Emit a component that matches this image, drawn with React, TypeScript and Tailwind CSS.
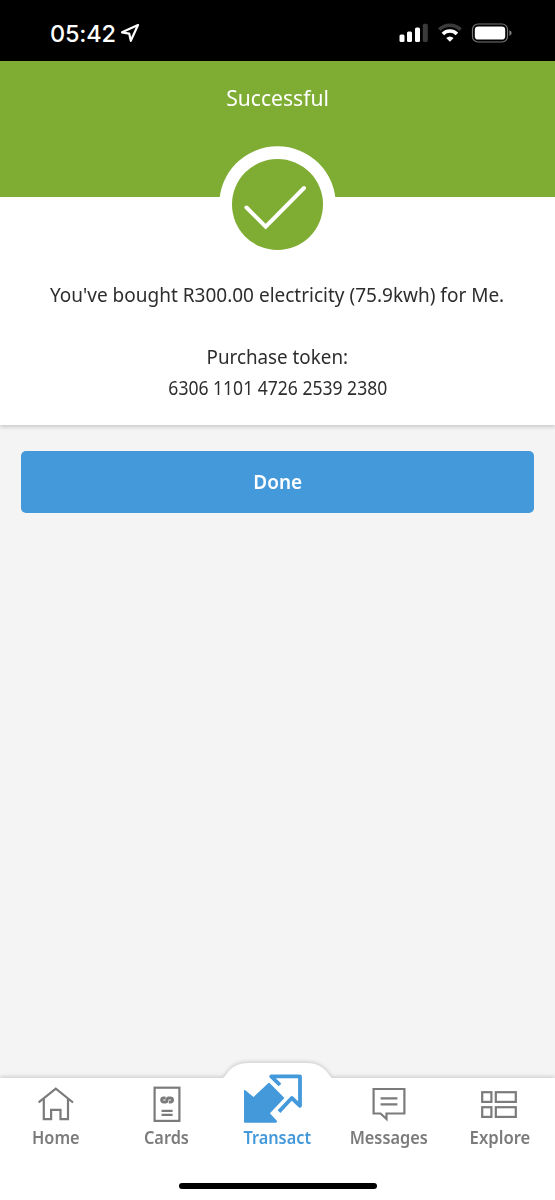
import type { ReactNode } from 'react';

function StatusBar() {
  return (
    <div className="flex h-[61px] shrink-0 items-center bg-black pr-[42px] pl-[50px] text-white">
      <span className="mt-[6px] w-[65px] font-['Inter',sans-serif] text-[23.5px] leading-[30px] font-medium tracking-[-0.2px] whitespace-nowrap">
        05:42
      </span>
      <svg className="mt-[5px] ml-[5px]" width="20" height="20" viewBox="0 0 20 20" fill="none">
        <path
          d="M18 2 L2 9.3 L9.2 10.6 L10.8 17.8 Z"
          stroke="currentColor"
          strokeWidth="2.2"
          strokeLinejoin="round"
        />
      </svg>
      <svg className="mt-[5px] ml-auto" width="114" height="22" viewBox="0 0 114 22">
        <g fill="#fff">
          <rect x="0.5" y="12.5" width="5" height="7.5" rx="1.5" />
          <rect x="8" y="9.5" width="5" height="10.5" rx="1.5" />
          <rect x="16" y="5.5" width="5" height="14.5" rx="1.5" />
          <rect x="23.8" y="1.7" width="5" height="18.3" rx="1.5" fill="#3a3a3a" />
        </g>
        <g fill="none" strokeWidth="3.6">
          <path d="M40.2 7.6 A15.5 15.5 0 0 1 61.6 7.6" stroke="#3a3a3a" />
          <path d="M43.9 12 A9.8 9.8 0 0 1 57.9 12" stroke="#fff" />
        </g>
        <path d="M47.2 16 Q50.9 13 54.6 16 L50.9 19.8 Z" fill="#fff" />
        <rect x="73.5" y="2" width="35" height="18" rx="5.5" fill="none" stroke="#777" strokeWidth="1.2" />
        <rect x="75.8" y="4.4" width="30.4" height="13.2" rx="3.4" fill="#fff" />
        <path d="M110.3 8.2 Q112.7 9 112.7 11 T110.3 13.8 Z" fill="#777" />
      </svg>
    </div>
  );
}

function HomeIcon() {
  return (
    <svg width="36" height="36" viewBox="0 0 36 36" fill="none" stroke="currentColor" strokeWidth="2.2">
      <path d="M0.6 16.5 L17.8 2.6 L35 16.5" />
      <path d="M5.8 13 V33.2 H13.1 V23.8 H22.5 V33.2 H30 V13" />
    </svg>
  );
}

function CardsIcon() {
  return (
    <svg width="36" height="36" viewBox="0 0 36 36" fill="none" stroke="currentColor" strokeWidth="2.2">
      <rect x="5.6" y="1.7" width="24.8" height="33.2" />
      <path d="M12.6 24.8 H23.6 M12.6 28.9 H23.6" />
      <path
        d="M16.6 12 H14.8 Q12.6 12 12.6 14 Q12.6 16 15 16 H16.4 Q18 16 18 14.2 Q18 12 19.7 12 H21.2 Q23.6 12 23.6 14 Q23.6 16 21.4 16 H19.8"
        strokeWidth="2.8"
      />
    </svg>
  );
}

function TransactIcon() {
  return (
    <svg className="mr-[9px]" width="60" height="50" viewBox="0 0 60 50">
      <path
        d="M1.8 17.8 L10.6 25 L26 10.5 L40.4 25 L25.9 40.2 L33.2 48.4 L32.8 49 H1.8 Z"
        fill="currentColor"
        stroke="currentColor"
        strokeWidth="1.6"
        strokeLinejoin="round"
      />
      <path
        d="M37 12 L28.2 3.3 H57 V32.8 L48.8 25 L36 38.6"
        fill="none"
        stroke="currentColor"
        strokeWidth="3.8"
        strokeLinejoin="round"
      />
    </svg>
  );
}

function MessagesIcon() {
  return (
    <svg width="36" height="36" viewBox="0 0 36 36" fill="none" stroke="currentColor" strokeWidth="2.2">
      <path d="M2.6 3 H33.4 V27.5 H15.5 V33 L9.5 27.5 H2.6 Z" />
      <path d="M9.6 12.4 H26.4 M9.6 18.4 H26.4" />
    </svg>
  );
}

function ExploreIcon() {
  return (
    <svg className="mr-[1px]" width="36" height="36" viewBox="0 0 36 36" fill="none" stroke="currentColor" strokeWidth="2.2">
      <rect x="1.2" y="6.2" width="9.2" height="9.7" />
      <rect x="14.8" y="6.2" width="20" height="9.7" />
      <rect x="1.2" y="21.2" width="9.2" height="9.7" />
      <rect x="14.8" y="21.2" width="20" height="9.7" />
    </svg>
  );
}

interface TabProps {
  label: string;
  icon: ReactNode;
  scale: string;
  active?: boolean;
}

function Tab({ label, icon, scale, active }: TabProps) {
  return (
    <button className={`flex flex-1 flex-col items-center ${active ? 'text-[#4499db]' : 'text-[#7b7b7b]'}`}>
      <span className={`flex items-end ${active ? 'h-[61px]' : 'h-[60px]'}`}>{icon}</span>
      <span className={`text-[17px] leading-6 font-semibold whitespace-nowrap ${active ? 'mt-[3px]' : 'mt-1'} ${scale}`}>
        {label}
      </span>
    </button>
  );
}

function TabBar() {
  return (
    <nav className="relative flex h-[138px] shrink-0 flex-col items-center">
      {/* bar background with the raised bump behind the active tab */}
      <svg
        className="absolute top-0 left-0 overflow-visible drop-shadow-[0_-1px_2px_rgba(0,0,0,0.18)]"
        width="555"
        height="138"
        viewBox="0 0 555 138"
      >
        <path d="M0 16 H222 C224 16 225 14 228 10 C233 4 240 1 248 1 H307 C315 1 322 4 327 10 C330 14 331 16 333 16 H555 V138 H0 Z" fill="#fff" />
      </svg>
      <div className="relative flex w-full">
        <Tab label="Home" icon={<HomeIcon />} scale="scale-x-[0.96]" />
        <Tab label="Cards" icon={<CardsIcon />} scale="scale-x-[0.96]" />
        <Tab label="Transact" icon={<TransactIcon />} scale="scale-x-[0.96]" active />
        <Tab label="Messages" icon={<MessagesIcon />} scale="scale-x-[0.96]" />
        <Tab label="Explore" icon={<ExploreIcon />} scale="scale-x-[0.98]" />
      </div>
      <div className="relative mt-auto mb-[11px] h-[6px] w-[198px] rounded-full bg-black" />
    </nav>
  );
}

export default function App() {
  return (
    <div className="flex h-[1200px] w-[555px] flex-col overflow-hidden bg-[#f4f4f4] font-['Noto_Sans',sans-serif]">
      <StatusBar />

      <main className="flex flex-1 flex-col">
        <section className="flex h-[364px] flex-col items-center bg-white shadow-[0_2px_4px_rgba(0,0,0,0.18)]">
          <header className="flex h-[136px] w-full flex-col items-center bg-[#7fad33] pt-[20px] text-white">
            <h1 className="scale-x-[0.96] text-[22px] leading-[32px] font-normal">Successful</h1>
            <svg className="mt-[33px] shrink-0" width="117" height="117" viewBox="0 0 117 117">
              <circle cx="58.5" cy="58.5" r="58.3" fill="#fff" />
              <circle cx="58.5" cy="58.5" r="45.5" fill="#7fad33" />
              <path
                d="M27.5 61.5 L46.7 80.7 L85 42"
                fill="none"
                stroke="#fff"
                strokeWidth="4"
                strokeLinecap="round"
              />
            </svg>
          </header>
          <div className="mt-[82px] flex flex-col items-center text-[20px] leading-[31px] whitespace-nowrap text-[#2d2d2d]">
            <p className="scale-x-[0.95]">You've bought R300.00 electricity (75.9kwh) for Me.</p>
            <p className="mt-[31px] scale-x-[0.94]">Purchase token:</p>
            <p className="scale-x-[0.877]">6306 1101 4726 2539 2380</p>
          </div>
        </section>

        <button className="mx-[21px] mt-[26px] flex h-[62px] items-center justify-center rounded-[5px] bg-[#4499db] text-[20px] font-semibold text-white">
          <span className="scale-x-[0.95]">Done</span>
        </button>
      </main>

      <TabBar />
    </div>
  );
}
